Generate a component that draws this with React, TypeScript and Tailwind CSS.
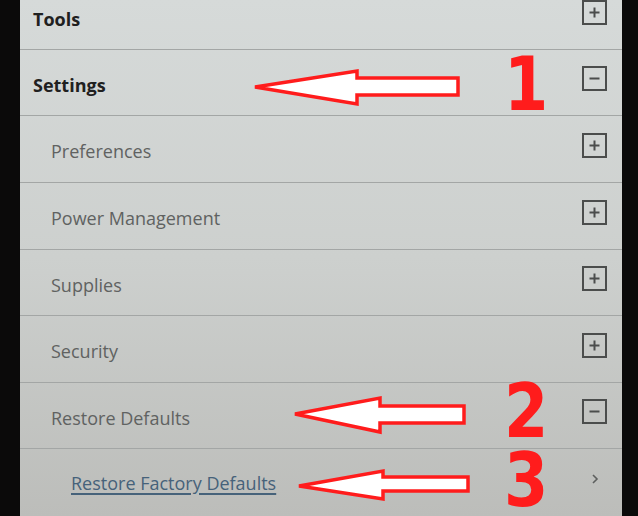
import React from 'react';

type Row = {
  label: string;
  level: 'top' | 'sub' | 'link';
  icon: 'plus' | 'minus' | 'chevron';
  height: string;
};

const rows: Row[] = [
  { label: 'Tools', level: 'top', icon: 'plus', height: 'h-[66px]' },
  { label: 'Settings', level: 'top', icon: 'minus', height: 'h-[66px]' },
  { label: 'Preferences', level: 'sub', icon: 'plus', height: 'h-[67px]' },
  { label: 'Power Management', level: 'sub', icon: 'plus', height: 'h-[67px]' },
  { label: 'Supplies', level: 'sub', icon: 'plus', height: 'h-[66px]' },
  { label: 'Security', level: 'sub', icon: 'plus', height: 'h-[67px]' },
  { label: 'Restore Defaults', level: 'sub', icon: 'minus', height: 'h-[66px]' },
  { label: 'Restore Factory Defaults', level: 'link', icon: 'chevron', height: 'h-[70px]' },
];

const BoxIcon = ({ kind }: { kind: 'plus' | 'minus' }) => (
  <div className="w-[25px] h-[25px] border-2 border-[#4b4d4c] flex items-center justify-center mb-[8px]">
    <svg width="13" height="13" viewBox="0 0 13 13">
      <path d="M1.5 6.5h10" stroke="#4b4d4c" strokeWidth="2" />
      {kind === 'plus' && <path d="M6.5 1.5v10" stroke="#4b4d4c" strokeWidth="2" />}
    </svg>
  </div>
);

const Chevron = () => (
  <div className="w-[25px] h-[25px] flex items-center justify-center mb-[10px]">
    <svg width="8" height="12" viewBox="0 0 8 12">
      <path d="M2 2l4 4-4 4" fill="none" stroke="#5d5f5e" strokeWidth="1.6" />
    </svg>
  </div>
);

const MenuRow = ({ row }: { row: Row }) => {
  const text =
    row.level === 'top'
      ? 'pl-[13px] text-[18px] font-bold text-[#1f2020] mt-[4px]'
      : row.level === 'sub'
      ? 'pl-[31px] text-[18px] text-[#606261] mt-[4px]'
      : 'pl-[51px] text-[18px] text-[#46627a] underline underline-offset-[3px] decoration-[1.5px] -mt-[2px]';

  return (
    <div className={`${row.height} flex items-center justify-between pr-[15px] border-b border-[#a3a6a5]`}>
      <span className={`${text} leading-none`}>{row.label}</span>
      {row.icon === 'chevron' ? <Chevron /> : <BoxIcon kind={row.icon} />}
    </div>
  );
};

const Digit = ({ value, top }: { value: string; top: string }) => (
  <div
    className={`absolute left-[504px] ${top} h-[56px] text-[74px] font-bold leading-[56px] text-[#ff1c1c] scale-x-[0.86] origin-left`}
    style={{ fontFamily: '"DejaVu Sans", sans-serif' }}
  >
    {value}
  </div>
);

export default function App() {
  return (
    <div
      className="relative w-[638px] h-[516px] overflow-hidden flex bg-[#0a0a0a]"
      style={{ fontFamily: '"Open Sans", "Noto Sans", sans-serif' }}
    >
      <div className="w-[20px] bg-[#0b0a0a]" />
      <div className="flex-1 bg-gradient-to-b from-[#d6dad9] via-[#cdd0ce] to-[#bcbdba] overflow-hidden">
        <div className="-mt-[16px] flex flex-col">
          {rows.map((row) => (
            <MenuRow key={row.label} row={row} />
          ))}
        </div>
      </div>
      <div className="w-[16px] bg-[#0a0a0a]" />

      <svg className="absolute inset-0 pointer-events-none" width="638" height="516" viewBox="0 0 638 516">
        <g fill="#ffffff" stroke="#ff1c1c" strokeWidth="3.5" strokeLinejoin="miter">
          <polygon points="255,87 357,71 357,78 458,78 458,95 357,95 357,104" />
          <polygon points="295,414 380,398 380,406 464,406 464,423 380,423 380,432" />
          <polygon points="299,486 383,471 383,477 468,477 468,491 383,491 383,499" />
        </g>
      </svg>

      <Digit value="1" top="top-[56px]" />
      <Digit value="2" top="top-[383px]" />
      <Digit value="3" top="top-[452px]" />
    </div>
  );
}
